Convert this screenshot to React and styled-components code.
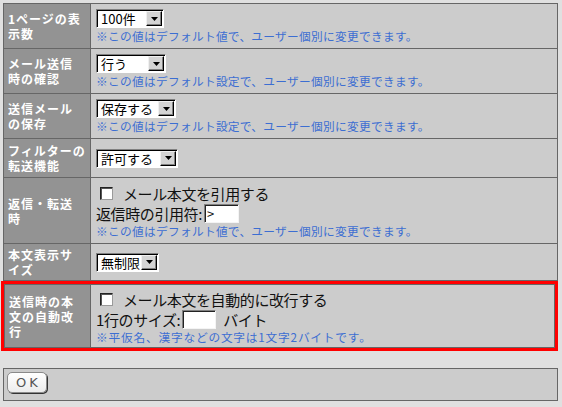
import React from 'react'
import styled, {createGlobalStyle} from 'styled-components'

const GlobalStyle = createGlobalStyle`
    body {
        margin: 0;
        background-color: #e0e0e0;
        font-family: "Noto Sans CJK JP", "Noto Sans", sans-serif;
    }
`

export default function App() {
    return (
        <Page>
            <GlobalStyle />
            <SettingsTable>
                <Label><span>1ページの表</span><span>示数</span></Label>
                <Value>
                    <Select width={68}>100件</Select>
                    <Note>※この値はデフォルト値で、ユーザー個別に変更できます。</Note>
                </Value>

                <Label><span>メール送信</span><span>時の確認</span></Label>
                <Value>
                    <Select width={70}>行う</Select>
                    <Note>※この値はデフォルト設定で、ユーザー個別に変更できます。</Note>
                </Value>

                <Label><span>送信メール</span><span>の保存</span></Label>
                <Value>
                    <Select width={80}>保存する</Select>
                    <Note>※この値はデフォルト設定で、ユーザー個別に変更できます。</Note>
                </Value>

                <Label><span>フィルターの</span><span>転送機能</span></Label>
                <Value>
                    <Select width={82}>許可する</Select>
                </Value>

                <Label><span>返信・転送</span><span>時</span></Label>
                <Value>
                    <Line>
                        <Checkbox />
                        メール本文を引用する
                    </Line>
                    <Line>
                        返信時の引用符:
                        <TextBox width={35}>&gt;</TextBox>
                    </Line>
                    <Note>※この値はデフォルト値で、ユーザー個別に変更できます。</Note>
                </Value>

                <Label pad={3}><span>本文表示サ</span><span>イズ</span></Label>
                <Value>
                    <Select width={63}>無制限</Select>
                </Value>
            </SettingsTable>

            <Highlight>
                <SettingsTable narrow>
                    <Label><span>送信時の本</span><span>文の自動改</span><span>行</span></Label>
                    <Value tight>
                        <Line>
                            <Checkbox />
                            メール本文を自動的に改行する
                        </Line>
                        <Line>
                            1行のサイズ:
                            <TextBox width={34} />
                            <Unit>バイト</Unit>
                        </Line>
                        <Note wide>※平仮名、漢字などの文字は1文字2バイトです。</Note>
                    </Value>
                </SettingsTable>
            </Highlight>

            <ButtonBar>
                <OkButton>OK</OkButton>
            </ButtonBar>
        </Page>
    )
}

const Page = styled.div`
    padding: 3px 0 0 1px;
`
const SettingsTable = styled.div`
    display: grid;
    grid-template-columns: ${props => props.narrow ? '85px' : '86px'} 1fr;
    gap: 1px;
    width: ${props => props.narrow ? 'auto' : '553px'};
    margin-left: ${props => props.narrow ? '0' : '2px'};
    background-color: #666;
    border: 1px solid #666;
`
const Label = styled.div`
    display: flex;
    flex-direction: column;
    justify-content: center;
    padding: ${props => (props.pad ?? 4) + 'px'} 4px;
    background-color: #939393;
    color: #fff;
    font-size: 12px;
    font-weight: 700;
    line-height: 15px;
    letter-spacing: 1px;

    span {
        display: block;
        height: 15px;
        white-space: nowrap;
    }
`
const Value = styled.div`
    display: flex;
    flex-direction: column;
    justify-content: center;
    align-items: flex-start;
    padding: ${props => props.tight ? '4px 5px 3px' : '5px'};
    background-color: #cccccc;
`
const Note = styled.div`
    color: #3c6ed2;
    font-size: 11.7px;
    line-height: 15px;
    letter-spacing: ${props => props.wide ? '0.8px' : '0.3px'};
    white-space: nowrap;
`
const Line = styled.div`
    display: flex;
    align-items: center;
    height: 20px;
    color: #111;
    font-size: 15px;
    letter-spacing: -0.4px;
    white-space: nowrap;
`
const Checkbox = styled.span`
    display: inline-block;
    width: 11px;
    height: 11px;
    margin: 0 10px 0 4px;
    background-color: #fff;
    border: 1px solid;
    border-color: #222 #9a9a9a #9a9a9a #222;
    box-shadow: inset 1px 1px 0 #555;
`
const TextBox = styled.span`
    display: inline-flex;
    align-items: center;
    box-sizing: border-box;
    width: ${props => props.width + 'px'};
    height: 19px;
    margin-left: 2px;
    padding-left: 2px;
    background-color: #fff;
    border: 1px solid;
    border-color: #808080 #f4f4f4 #f4f4f4 #808080;
    box-shadow: inset 1px 1px 0 #222;
    font-size: 13px;
    letter-spacing: 0;
`
const Unit = styled.span`
    margin-left: 7px;
`
const SelectBox = styled.div`
    display: inline-flex;
    align-items: stretch;
    box-sizing: border-box;
    width: ${props => props.width + 'px'};
    height: 19px;
    background-color: #fff;
    border: 1px solid;
    border-color: #808080 #fff #fff #808080;
    box-shadow: inset 1px 1px 0 #000;
`
const SelectText = styled.span`
    flex: 1;
    padding: 1px 0 0 4px;
    color: #000;
    font-size: 13px;
    line-height: 16px;
    white-space: nowrap;
`
const ArrowButton = styled.span`
    display: flex;
    align-items: center;
    justify-content: center;
    box-sizing: border-box;
    width: 16px;
    margin: 1px 1px 1px 0;
    background-color: #d4d4d4;
    border: 1px solid;
    border-color: #f0f0f0 #000 #000 #f0f0f0;
    box-shadow: inset -1px -1px 0 #808080;
`

function Select({width, children}) {
    return (
        <SelectBox width={width}>
            <SelectText>{children}</SelectText>
            <ArrowButton>
                <svg width="7" height="4" viewBox="0 0 7 4">
                    <path d="M0 0h7L3.5 4z" fill="#000" />
                </svg>
            </ArrowButton>
        </SelectBox>
    )
}

const Highlight = styled.div`
    width: 551px;
    border: 3px solid #ff0000;
`
const ButtonBar = styled.div`
    box-sizing: border-box;
    width: 555px;
    height: 33px;
    margin: 17px 0 0 2px;
    padding: 3px;
    background-color: #cccccc;
    border: 1px solid #666;
`
const OkButton = styled.div`
    display: flex;
    align-items: center;
    justify-content: center;
    box-sizing: border-box;
    width: 40px;
    height: 21px;
    background: linear-gradient(#ffffff, #ececec);
    border: 1px solid #8a8a8a;
    border-radius: 5px;
    box-shadow: 1px 1px 0 #333;
    color: #555;
    font-family: "DejaVu Sans", sans-serif;
    font-size: 13px;
    letter-spacing: 3px;
    padding-left: 3px;
`
